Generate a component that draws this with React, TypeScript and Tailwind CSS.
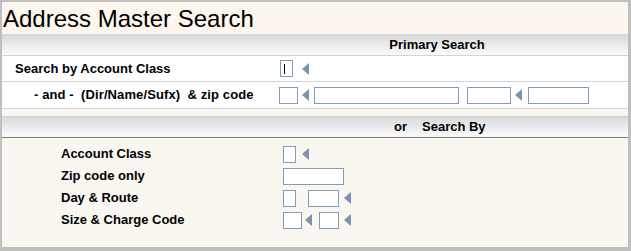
import React from "react"

const font = { fontFamily: '"Liberation Sans", Arial, sans-serif' }

function Arrow() {
  return (
    <svg width="7" height="12" viewBox="0 0 7 12" className="shrink-0">
      <polygon points="7,0 7,12 0,6" fill="#7a94ae" />
    </svg>
  )
}

function Box({ w, focus }: { w: string; focus?: boolean }) {
  return (
    <div className={`${w} relative h-[17px] shrink-0 border border-[#7f9db9] bg-white`}>
      {focus && <span className="absolute left-[3px] top-[3px] h-[10px] w-px bg-black" />}
    </div>
  )
}

function HeaderBar({ children, className }: { children: React.ReactNode; className: string }) {
  return (
    <div
      className={`flex h-[20px] items-center bg-gradient-to-b from-[#dadada] to-[#fbfbfb] text-[13px] font-bold text-black ${className}`}
    >
      {children}
    </div>
  )
}

export default function App() {
  return (
    <div
      style={font}
      className="flex h-[251px] w-[631px] flex-col border-b-[4px] border-l-2 border-r-[3px] border-t-2 border-[#bfbfbf] bg-[#faf6f0] text-black"
    >
      {/* Title */}
      <div className="h-[32px] bg-[#fcf6ef] pl-[1px] pt-[3px] text-[24px] leading-[28px]">Address Master Search</div>
      <div className="h-px bg-[#d6d6d6]" />

      {/* Primary search */}
      <HeaderBar className="justify-center pl-[244px]">Primary Search</HeaderBar>
      <div className="h-px bg-[#d4d4d4]" />
      <div className="bg-white text-[13px] font-bold">
        <div className="flex h-[26px] items-center border-b border-[#d4d4d4]">
          <div className="w-[278px] shrink-0 pl-[13px]">Search by Account Class</div>
          <div className="flex items-center gap-[9px]">
            <Box w="w-[13px]" focus />
            <Arrow />
          </div>
        </div>
        <div className="flex h-[27px] items-center border-b border-[#d4d4d4]">
          <div className="w-[277px] shrink-0 whitespace-pre pl-[32px] tracking-[0.1px]">- and -  (Dir/Name/Sufx)  &amp; zip code</div>
          <div className="flex items-center">
            <Box w="w-[19px]" />
            <div className="ml-[4px]">
              <Arrow />
            </div>
            <div className="ml-[5px]">
              <Box w="w-[145px]" />
            </div>
            <div className="ml-[8px]">
              <Box w="w-[44px]" />
            </div>
            <div className="ml-[4px]">
              <Arrow />
            </div>
            <div className="ml-[6px]">
              <Box w="w-[61px]" />
            </div>
          </div>
        </div>
      </div>
      <div className="h-[7px]" />
      <div className="h-px bg-[#d0d0d0]" />

      {/* Or search by */}
      <HeaderBar className="pl-[392px]">
        <span>or</span>
        <span className="ml-[15px]">Search By</span>
      </HeaderBar>
      <div className="h-px bg-[#7a7a7a]" />
      <div className="flex flex-col pt-[5px] text-[13px] font-bold">
        <div className="flex h-[22px] items-center">
          <div className="w-[281px] shrink-0 pl-[59px]">Account Class</div>
          <div className="flex items-center gap-[6px]">
            <Box w="w-[13px]" />
            <Arrow />
          </div>
        </div>
        <div className="flex h-[22px] items-center">
          <div className="w-[281px] shrink-0 pl-[59px]">Zip code only</div>
          <Box w="w-[61px]" />
        </div>
        <div className="flex h-[22px] items-center">
          <div className="w-[281px] shrink-0 pl-[59px]">Day &amp; Route</div>
          <div className="flex items-center">
            <Box w="w-[13px]" />
            <div className="ml-[12px]">
              <Box w="w-[31px]" />
            </div>
            <div className="ml-[5px]">
              <Arrow />
            </div>
          </div>
        </div>
        <div className="flex h-[22px] items-center">
          <div className="w-[281px] shrink-0 pl-[59px]">Size &amp; Charge Code</div>
          <div className="flex items-center">
            <Box w="w-[19px]" />
            <div className="ml-[3px]">
              <Arrow />
            </div>
            <div className="ml-[7px]">
              <Box w="w-[20px]" />
            </div>
            <div className="ml-[5px]">
              <Arrow />
            </div>
          </div>
        </div>
      </div>
    </div>
  )
}
